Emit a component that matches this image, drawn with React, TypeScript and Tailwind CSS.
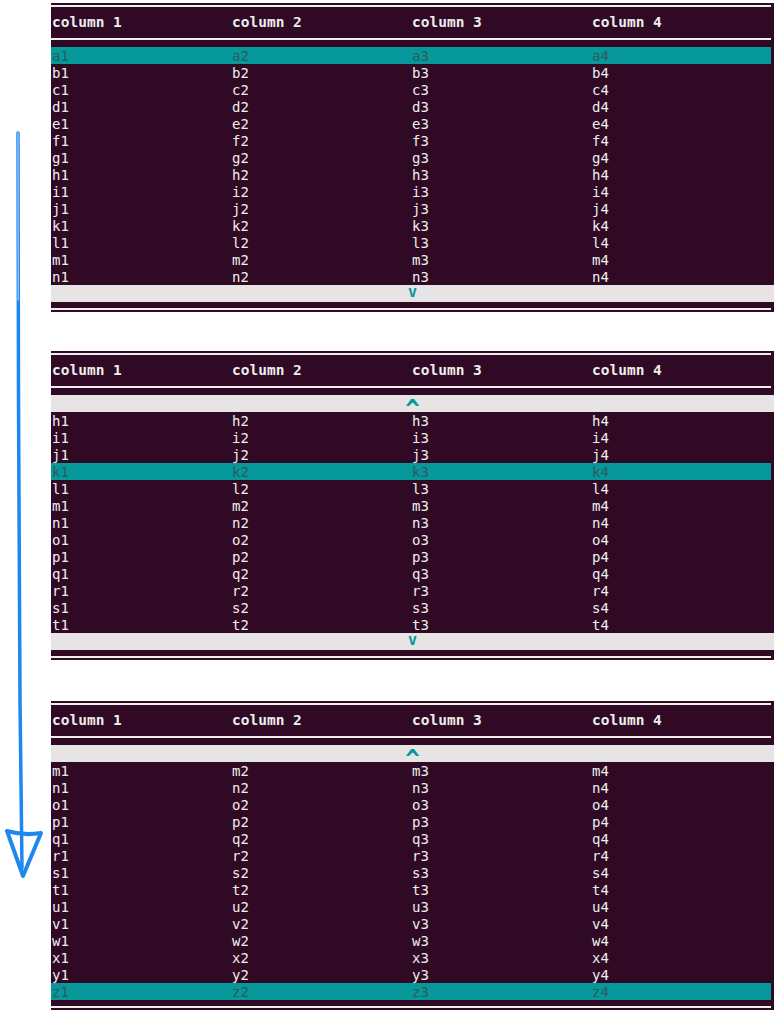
const mono = { fontFamily: '"DejaVu Sans Mono", "Liberation Mono", monospace' }

const letters = 'abcdefghijklmnopqrstuvwxyz'.split('')

type PanelProps = {
  start: number
  count: number
  selected: string
  up?: boolean
  down?: boolean
  className?: string
}

const cols = 'grid grid-cols-[180px_180px_180px_1fr] items-center pl-px'

const ScrollBar = ({ glyph }: { glyph: string }) => (
  <div className="h-[17px] bg-[#e6e4e5] flex justify-center text-[#06989a] font-bold">
    {glyph === '^' ? (
      <span className="relative top-[6px] text-[24px] leading-[17px]">^</span>
    ) : (
      <span className="text-[15px] leading-[15px]">v</span>
    )}
  </div>
)

const Panel = ({ start, count, selected, up, down, className }: PanelProps) => {
  const rows = letters.slice(start, start + count)
  return (
    <div className={`w-[723px] bg-[#300a24] pt-[2px] pb-[2px] ${className ?? ''}`}>
      <div className="h-[2px] bg-[#eeeeec] mr-[3px]" />
      <div className={`h-[31px] ${cols} text-[#eeeeec] font-bold text-[14.5px]`}>
        <span>column 1</span>
        <span>column 2</span>
        <span>column 3</span>
        <span>column 4</span>
      </div>
      <div className="h-[2px] bg-[#eeeeec] mr-[3px]" />
      <div className="h-[7px]" />
      {up ? <ScrollBar glyph="^" /> : null}
      {rows.map((r) => {
        const sel = r === selected
        return (
          <div
            key={r}
            className={`h-[17px] ${cols} text-[14px] leading-none ${
              sel ? 'bg-[#06989a] text-[#2f5b5d] mr-[3px]' : 'text-[#eeeeec]'
            }`}
          >
            <span>{r}1</span>
            <span>{r}2</span>
            <span>{r}3</span>
            <span>{r}4</span>
          </div>
        )
      })}
      {down ? <ScrollBar glyph="v" /> : null}
      <div className="h-[6px]" />
      <div className="h-[2px] bg-[#eeeeec] mr-[3px]" />
    </div>
  )
}

const Arrow = () => (
  <svg width="51" height="1014" viewBox="0 0 51 1014" fill="none">
    <path d="M18 133 L18.5 400 L20 700 L22 868" stroke="#1e88ee" strokeWidth="3.5" strokeLinecap="round" />
    <path d="M18 133 L18.3 300" stroke="#8cc0f6" strokeWidth="1.5" strokeLinecap="round" />
    <path
      d="M7 831 Q24 836 41 833 L23 876 Z"
      stroke="#1e88ee"
      strokeWidth="4"
      strokeLinejoin="round"
      fill="none"
    />
  </svg>
)

export default function App() {
  return (
    <div className="w-[777px] h-[1014px] bg-white flex overflow-hidden" style={mono}>
      <div className="w-[51px] shrink-0">
        <Arrow />
      </div>
      <div className="flex flex-col">
        <Panel start={0} count={14} selected="a" down className="mt-[3px]" />
        <Panel start={7} count={13} selected="k" up down className="mt-[39px]" />
        <Panel start={12} count={14} selected="z" up className="mt-[41px]" />
      </div>
    </div>
  )
}
